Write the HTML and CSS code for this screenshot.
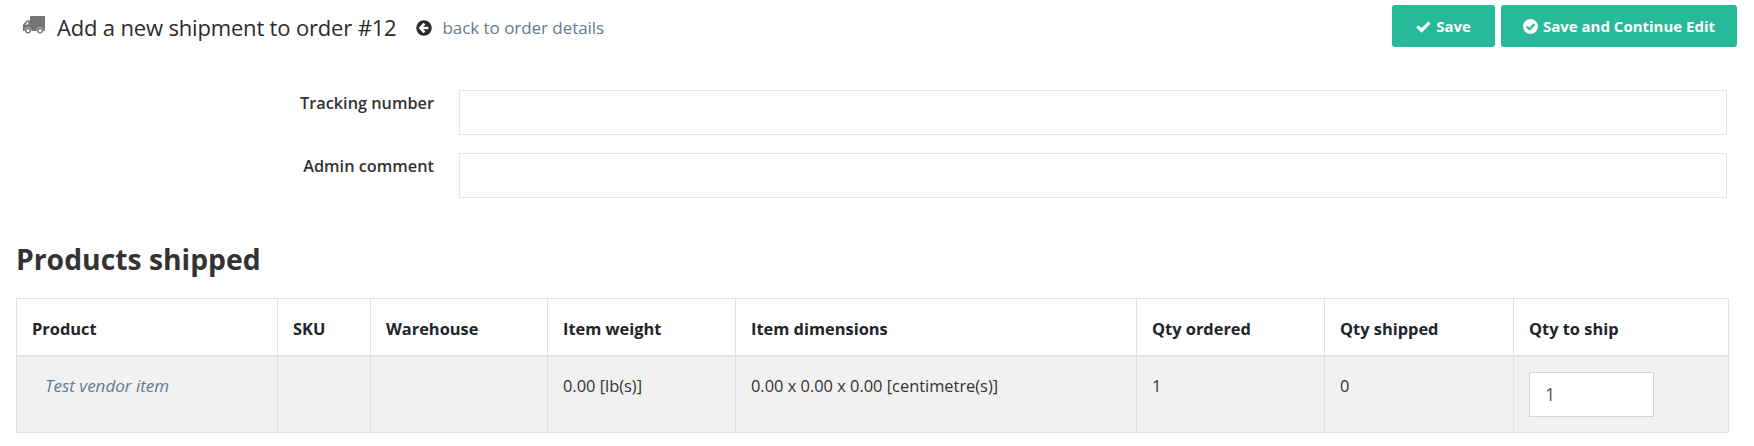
FILE: index.html
```html
<!DOCTYPE html>
<html lang="en">

<head>
    <meta charset="UTF-8">
    <title>Add a new shipment</title>
    <link rel="stylesheet" href="styles.css">
</head>

<body>
    <div class="content-header">
        <div class="page-title">
            <svg class="truck-icon" viewBox="0 0 22 18" width="22" height="18">
                <path fill="#757575" d="M7 0h15v15H7z" />
                <path fill="#757575" d="M7 4.5H3.6L0 8.4V15h7z" />
                <path fill="#fff" d="M1.8 8.6l2.5-2.5h1.2v2.5z" />
                <circle cx="5" cy="14.6" r="3.4" fill="#fff" />
                <circle cx="17" cy="14.6" r="3.4" fill="#fff" />
                <circle cx="5" cy="14.6" r="2.3" fill="#fff" stroke="#757575" stroke-width="1.4" />
                <circle cx="17" cy="14.6" r="2.3" fill="#fff" stroke="#757575" stroke-width="1.4" />
            </svg>
            <h1>Add a new shipment to order #12</h1>
            <svg class="back-icon" viewBox="0 0 14 14" width="16" height="16">
                <circle cx="7" cy="7" r="6.8" fill="#2b2b2b" />
                <path fill="none" stroke="#fff" stroke-width="2.2" d="M7.4 3.2L3.8 7l3.6 3.8M4 7h6.8" />
            </svg>
            <a class="back-link" href="#">back to order details</a>
        </div>
        <div class="header-buttons">
            <button class="btn btn-save">
                <svg viewBox="0 0 14 12" width="15" height="13">
                    <path fill="none" stroke="#fff" stroke-width="3" d="M1.3 5.8l3.9 3.9 7.4-7.6" />
                </svg>
                Save
            </button>
            <button class="btn btn-continue">
                <svg viewBox="0 0 14 14" width="15" height="15">
                    <circle cx="7" cy="7" r="7" fill="#fff" />
                    <path fill="none" stroke="#26ba9b" stroke-width="2" d="M3.6 7l2.5 2.5 4.4-4.6" />
                </svg>
                Save and Continue Edit
            </button>
        </div>
    </div>

    <div class="form-fields">
        <div class="form-row">
            <label>Tracking number</label>
            <input class="form-input" type="text">
        </div>
        <div class="form-row">
            <label>Admin comment</label>
            <input class="form-input" type="text">
        </div>
    </div>

    <h2 class="section-title">Products shipped</h2>

    <table class="products-table">
        <colgroup>
            <col class="col-product">
            <col class="col-sku">
            <col class="col-warehouse">
            <col class="col-weight">
            <col class="col-dimensions">
            <col class="col-ordered">
            <col class="col-shipped">
            <col class="col-ship">
        </colgroup>
        <thead>
            <tr>
                <th>Product</th>
                <th>SKU</th>
                <th>Warehouse</th>
                <th>Item weight</th>
                <th>Item dimensions</th>
                <th>Qty ordered</th>
                <th>Qty shipped</th>
                <th>Qty to ship</th>
            </tr>
        </thead>
        <tbody>
            <tr>
                <td><em class="product-name">Test vendor item</em></td>
                <td></td>
                <td></td>
                <td>0.00 [lb(s)]</td>
                <td>0.00 x 0.00 x 0.00 [centimetre(s)]</td>
                <td>1</td>
                <td>0</td>
                <td><input class="qty-input" type="text" value="1"></td>
            </tr>
        </tbody>
    </table>
</body>

</html>
```

FILE: styles.css
```css
* {
    box-sizing: border-box;
    padding: 0;
    margin: 0;
}

body {
    width: 1754px;
    height: 446px;
    overflow: hidden;
    padding: 0 26px 0 16px;
    font-family: "Open Sans", "Noto Sans", sans-serif;
    font-size: 16px;
    color: #333;
    background-color: #fff;
}

.content-header {
    display: flex;
    justify-content: space-between;
    height: 90px;
    padding-top: 5px;
}

.page-title {
    display: flex;
    align-items: center;
    height: 44px;
    padding-left: 7px;
}

.truck-icon {
    margin-bottom: 4px;
}

.page-title h1 {
    margin-left: 12px;
    font-size: 22px;
    font-weight: 400;
    letter-spacing: -0.17px;
    color: #2b2b2b;
}

.back-icon {
    margin-left: 19px;
    margin-top: 2px;
}

.back-link {
    margin-left: 11px;
    font-size: 17px;
    letter-spacing: -0.05px;
    color: #667a8c;
    text-decoration: none;
}

.header-buttons {
    display: flex;
    gap: 6px;
    margin-right: -9px;
}

.btn {
    display: flex;
    align-items: center;
    justify-content: center;
    gap: 5px;
    height: 42px;
    border: none;
    border-radius: 3px;
    background-color: #26ba9b;
    color: #fff;
    font-family: "Open Sans", sans-serif;
    font-size: 15px;
    font-weight: 700;
}

.btn-save {
    width: 103px;
}

.btn-continue {
    width: 236px;
}

.form-fields {
    display: flex;
    flex-direction: column;
    gap: 18px;
}

.form-row {
    display: flex;
    gap: 25px;
}

.form-row label {
    width: 418px;
    text-align: right;
    font-size: 16.3px;
    font-weight: 600;
    line-height: 26px;
    color: #333;
}

.form-input {
    flex: 1;
    height: 45px;
    margin-right: 1px;
    border: 1px solid #e4e4e4;
    background-color: #fff;
}

.section-title {
    margin-top: 44px;
    font-size: 28.3px;
    font-weight: 700;
    line-height: 34px;
    color: #333;
}

.products-table {
    table-layout: fixed;
    width: 1712px;
    margin-top: 22px;
    border-collapse: collapse;
    border: 1px solid #dee2e6;
}

.col-product { width: 261px; }
.col-sku { width: 93px; }
.col-warehouse { width: 177px; }
.col-weight { width: 188px; }
.col-dimensions { width: 401px; }
.col-ordered { width: 188px; }
.col-shipped { width: 189px; }
.col-ship { width: 215px; }

.products-table th,
.products-table td {
    padding: 0 15px;
    border: 1px solid #dee2e6;
    text-align: left;
    font-size: 16.4px;
}

.products-table th {
    height: 57px;
    padding-top: 4px;
    border-bottom-width: 2px;
    font-weight: 700;
    color: #212529;
}

.products-table td {
    height: 77px;
    padding-top: 17px;
    vertical-align: top;
    line-height: 24px;
    background-color: #f1f1f2;
    color: #333;
}

.product-name {
    padding-left: 13px;
    font-size: 17px;
    color: #667a8c;
}

.qty-input {
    display: block;
    width: 125px;
    height: 45px;
    margin-top: -2px;
    padding-left: 15px;
    border: 1px solid #ced4da;
    background-color: #fff;
    font-family: "Open Sans", sans-serif;
    font-size: 18px;
    color: #555;
}
```
